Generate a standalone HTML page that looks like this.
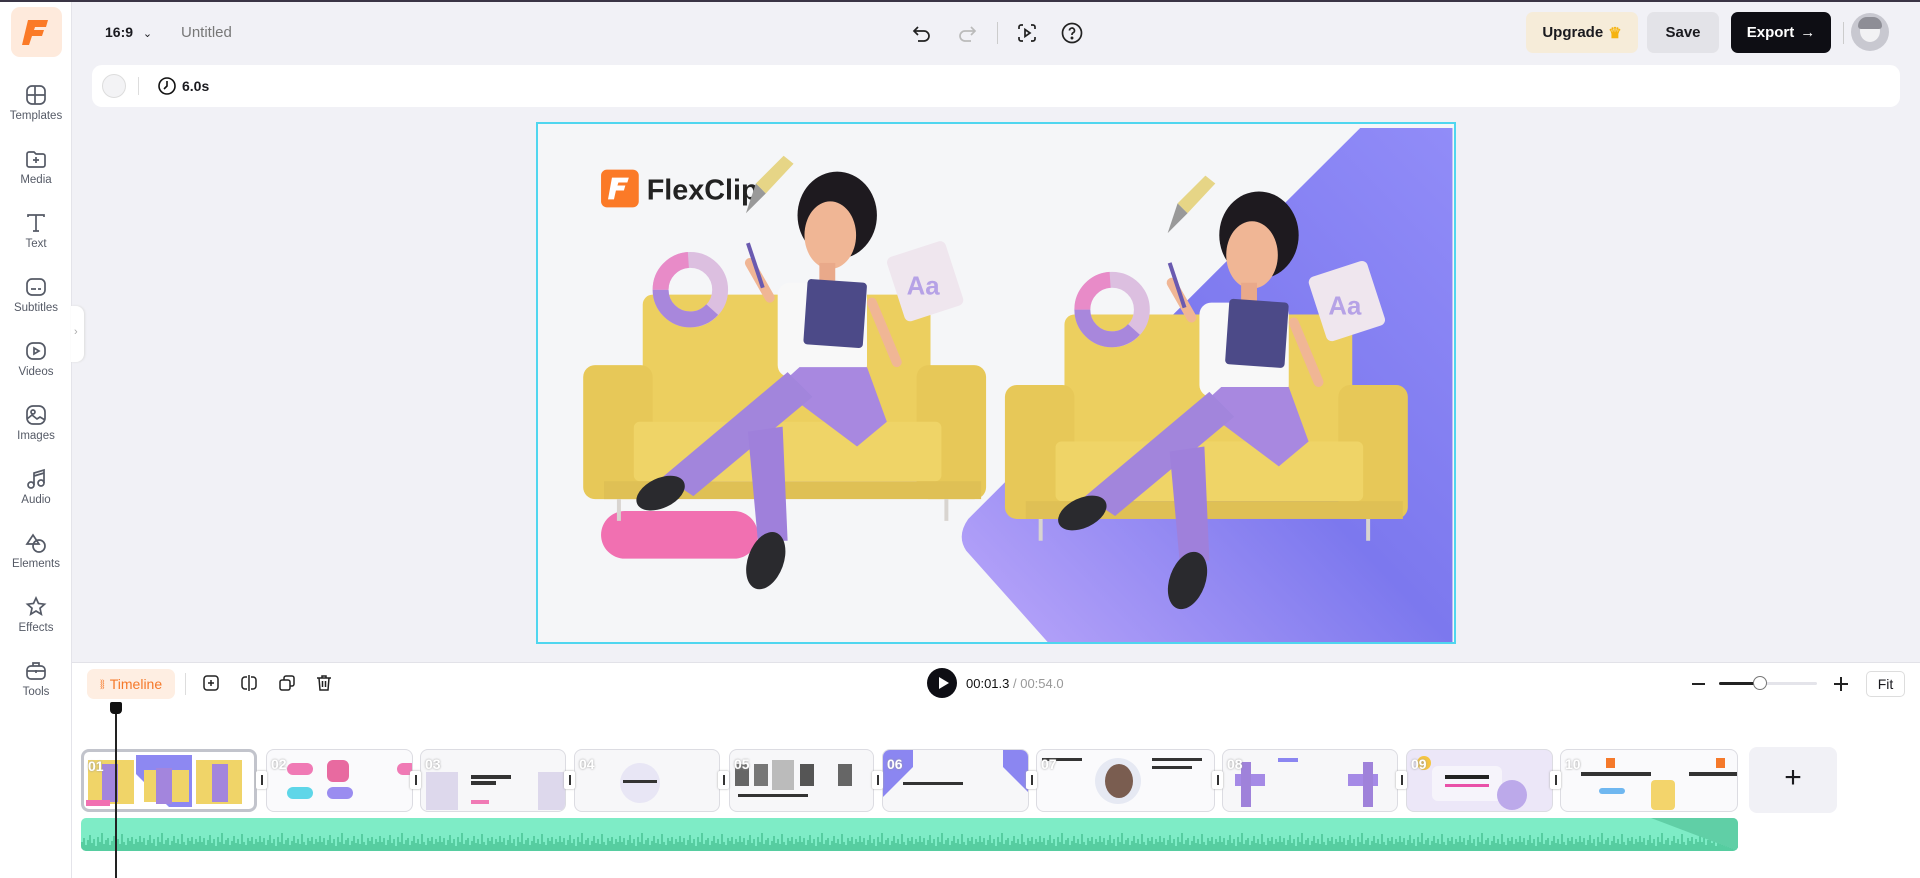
<!DOCTYPE html>
<html><head><meta charset="utf-8">
<style>
*{box-sizing:border-box;margin:0;padding:0}
body{width:1920px;height:878px;overflow:hidden;background:#f1f1f6;font-family:"Liberation Sans",sans-serif;position:relative;color:#1a1a1f}
.abs{position:absolute}
#topline{left:0;top:0;width:1920px;height:2px;background:#3a3545}
#side{left:0;top:0;width:72px;height:878px;background:#fff;border-right:1px solid #e4e4ea}
.logo{left:11px;top:7px;width:51px;height:50px;background:#feeadc;border-radius:9px}
.nav{left:0;width:72px;text-align:center;font-size:11.5px;color:#555a66}
.nav svg{display:block;margin:0 auto 3px}
.btn{border-radius:7px;font-size:15px;font-weight:bold;display:flex;align-items:center;justify-content:center}
#bar2{left:92px;top:65px;width:1808px;height:42px;background:#fff;border-radius:10px}
#canvas{left:536px;top:122px;width:920px;height:522px;border:2px solid #4fd6ef;background:#f5f6f8;overflow:hidden}
#tl{left:72px;top:662px;width:1848px;height:216px;background:#fff;border-top:1px solid #e2e2e8}
.clip{top:749px;height:63px;background:#f7f7f9;border:1px solid #dcdce2;border-radius:8px;overflow:hidden}
.num{position:absolute;left:4px;top:6px;color:#fff;font-weight:bold;font-size:14px;text-shadow:0 0 2px #999}
.hd{top:771px;width:11px;height:18px;background:#fff;border-radius:2px;box-shadow:0 0 2px #aaa}
.hd:after{content:"";position:absolute;left:5px;top:4px;width:1.5px;height:10px;background:#333}
</style></head><body>
<div class="abs" id="side"></div>
<div class="abs" id="topline"></div>
<div class="abs logo"><svg width="51" height="50" viewBox="0 0 51 50"><path d="M17 13h20l-2 7H24l-1 3h10l-2 6H21l-3 9h-7z" fill="#fb7a27"/></svg></div>

<div class="abs nav" style="top:83px"><svg width="24" height="24" viewBox="0 0 24 24" fill="none" stroke="#555a66" stroke-width="1.7"><rect x="3" y="3" width="18" height="18" rx="5"/><path d="M3 12h18M11 3v18"/></svg>Templates</div>
<div class="abs nav" style="top:147px"><svg width="24" height="24" viewBox="0 0 24 24" fill="none" stroke="#555a66" stroke-width="1.7"><path d="M3 7a2 2 0 0 1 2-2h5l2 2h7a2 2 0 0 1 2 2v9a2 2 0 0 1-2 2H5a2 2 0 0 1-2-2z"/><path d="M12 10v6M9 13h6"/></svg>Media</div>
<div class="abs nav" style="top:211px"><svg width="24" height="24" viewBox="0 0 24 24" fill="none" stroke="#555a66" stroke-width="1.7"><path d="M4 6V4h16v2M12 4v16M9 20h6"/></svg>Text</div>
<div class="abs nav" style="top:275px"><svg width="24" height="24" viewBox="0 0 24 24" fill="none" stroke="#555a66" stroke-width="1.7"><rect x="3" y="4" width="18" height="16" rx="5"/><path d="M7 14h5M14 14h3"/></svg>Subtitles</div>
<div class="abs nav" style="top:339px"><svg width="24" height="24" viewBox="0 0 24 24" fill="none" stroke="#555a66" stroke-width="1.7"><rect x="3" y="4" width="18" height="16" rx="6"/><path d="M10 9l5 3-5 3z"/></svg>Videos</div>
<div class="abs nav" style="top:403px"><svg width="24" height="24" viewBox="0 0 24 24" fill="none" stroke="#555a66" stroke-width="1.7"><rect x="3" y="3" width="18" height="18" rx="6"/><circle cx="9" cy="9" r="2"/><path d="M3 16l5-4 5 4 3-2 5 3"/></svg>Images</div>
<div class="abs nav" style="top:467px"><svg width="24" height="24" viewBox="0 0 24 24" fill="none" stroke="#555a66" stroke-width="1.7"><circle cx="7" cy="18" r="3"/><circle cx="17" cy="16" r="3"/><path d="M10 18V6l10-3v13"/><path d="M10 9l10-3"/></svg>Audio</div>
<div class="abs nav" style="top:531px"><svg width="24" height="24" viewBox="0 0 24 24" fill="none" stroke="#555a66" stroke-width="1.7"><path d="M3 13l6-9 6 9z"/><circle cx="15" cy="15" r="6"/></svg>Elements</div>
<div class="abs nav" style="top:595px"><svg width="24" height="24" viewBox="0 0 24 24" fill="none" stroke="#555a66" stroke-width="1.7"><path d="M12 3l2.5 5.5 6 .7-4.5 4 1.3 6L12 16l-5.3 3.2 1.3-6-4.5-4 6-.7z"/></svg>Effects</div>
<div class="abs nav" style="top:659px"><svg width="24" height="24" viewBox="0 0 24 24" fill="none" stroke="#555a66" stroke-width="1.7"><rect x="3" y="7" width="18" height="13" rx="4"/><path d="M9 7V4h6v3M3 12h18M12 11v3"/></svg>Tools</div>
<div class="abs" style="left:71px;top:306px;width:13px;height:56px;background:#fff;border-radius:0 8px 8px 0;box-shadow:1px 0 2px #ddd"><span style="position:absolute;left:3px;top:20px;font-size:11px;color:#aaa">›</span></div>

<div class="abs" style="left:105px;top:24px;font-size:14px;font-weight:bold">16:9 <span style="font-weight:normal;font-size:11px;margin-left:6px">⌄</span></div>
<div class="abs" style="left:181px;top:24px;font-size:15px;color:#777">Untitled</div>
<svg class="abs" style="left:910px;top:21px" width="24" height="24" viewBox="0 0 24 24" fill="none" stroke="#222" stroke-width="1.7"><path d="M8 6L4 10l4 4"/><path d="M4 10h10a5 5 0 0 1 0 10h-6"/></svg>
<svg class="abs" style="left:955px;top:21px" width="24" height="24" viewBox="0 0 24 24" fill="none" stroke="#bbb" stroke-width="1.7"><path d="M16 6l4 4-4 4"/><path d="M20 10H10a5 5 0 0 0 0 10h6"/></svg>
<div class="abs" style="left:997px;top:22px;width:1px;height:22px;background:#ccc"></div>
<svg class="abs" style="left:1015px;top:21px" width="24" height="24" viewBox="0 0 24 24" fill="none" stroke="#222" stroke-width="1.7"><path d="M4 8V6a2 2 0 0 1 2-2h2M16 4h2a2 2 0 0 1 2 2v2M20 16v2a2 2 0 0 1-2 2h-2M8 20H6a2 2 0 0 1-2-2v-2"/><path d="M10 8.5l5 3.5-5 3.5z"/></svg>
<svg class="abs" style="left:1060px;top:21px" width="24" height="24" viewBox="0 0 24 24" fill="none" stroke="#222" stroke-width="1.7"><circle cx="12" cy="12" r="9.5"/><path d="M9.5 9.5a2.5 2.5 0 1 1 3.5 2.3c-.7.4-1 .9-1 1.7v.5"/><circle cx="12" cy="17" r=".6" fill="#222"/></svg>
<div class="abs btn" style="left:1526px;top:12px;width:112px;height:41px;background:#f6ecd9">Upgrade <span style="color:#f5b30f;margin-left:5px">♛</span></div>
<div class="abs btn" style="left:1647px;top:12px;width:72px;height:41px;background:#e3e3e8">Save</div>
<div class="abs btn" style="left:1731px;top:12px;width:100px;height:41px;background:#0e0e14;color:#fff">Export <span style="margin-left:6px">→</span></div>
<div class="abs" style="left:1843px;top:22px;width:1px;height:22px;background:#ccc"></div>
<div class="abs" style="left:1851px;top:13px;width:38px;height:38px;border-radius:50%;background:#c8c8d0;overflow:hidden"><div style="position:absolute;left:9px;top:7px;width:20px;height:22px;border-radius:50%;background:#f2f2f4"></div><div style="position:absolute;left:7px;top:4px;width:24px;height:12px;border-radius:12px 12px 4px 4px;background:#8e8e96"></div></div>

<div class="abs" id="bar2">
<div class="abs" style="left:10px;top:9px;width:24px;height:24px;border-radius:50%;border:1px solid #ddd;background:#f3f3f5"></div>
<div class="abs" style="left:46px;top:12px;width:1px;height:18px;background:#ddd"></div>
<svg class="abs" style="left:65px;top:11px" width="20" height="20" viewBox="0 0 20 20" fill="none" stroke="#111" stroke-width="1.6"><circle cx="10" cy="10" r="8"/><path d="M10 5v5l-3 3"/></svg>
<div class="abs" style="left:90px;top:13px;font-size:14px;font-weight:bold">6.0s</div>
</div>

<div class="abs" id="canvas">
<svg width="916" height="518" viewBox="0 0 920 522">
<defs><linearGradient id="pg" x1="0" y1="1" x2="1" y2="0"><stop offset="0" stop-color="#bba7fa"/><stop offset=".5" stop-color="#7c78ee"/><stop offset="1" stop-color="#918cf8"/></linearGradient></defs>
<path d="M827 4H920V522H512L430 430Q420 415 432 398Z" fill="url(#pg)"/>
<rect x="62" y="46" width="38" height="38" rx="6" fill="#fb7a27"/>
<path d="M73 54h17l-1.5 5h-9l-1 3h8l-1.5 5h-8l-2 9h-6z" fill="#fff"/>
<text x="108" y="76" font-family="Liberation Sans" font-weight="bold" font-size="29" fill="#222">FlexClip</text>
<rect x="62" y="390" width="158" height="48" rx="24" fill="#f170b1"/>
<g id="w1">
<rect x="104" y="172" width="290" height="130" rx="10" fill="#eccf5f"/>
<rect x="44" y="243" width="70" height="135" rx="12" fill="#e7c858"/>
<rect x="380" y="243" width="70" height="135" rx="12" fill="#e7c858"/>
<rect x="95" y="300" width="310" height="60" rx="6" fill="#efd467"/>
<rect x="65" y="360" width="380" height="18" fill="#dfc055"/>
<path d="M80 378v22M410 378v22" stroke="#d8d4d0" stroke-width="4"/>
<circle cx="152" cy="167" r="30" fill="none" stroke="#dcbfe0" stroke-width="16"/>
<path d="M122 167a30 30 0 0 0 30 30 30 30 0 0 0 22-10" fill="none" stroke="#a887dc" stroke-width="16"/>
<path d="M150 137a30 30 0 0 0-28 30" fill="none" stroke="#e88bc8" stroke-width="16"/>
<rect x="358" y="125" width="62" height="68" rx="6" fill="#efe6ee" transform="rotate(-18 387 160)"/>
<text x="370" y="172" font-family="Liberation Sans" font-weight="bold" font-size="26" fill="#b6a2e6">Aa</text>
<path d="M218 60l28-28 10 8-28 30z" fill="#e6d586"/><path d="M218 60l-10 30 20-20z" fill="#999"/>
<ellipse cx="300" cy="92" rx="40" ry="44" fill="#1e1a1f"/>
<ellipse cx="293" cy="112" rx="26" ry="34" fill="#f0b695"/>
<rect x="282" y="140" width="16" height="18" fill="#e9a98a"/>
<rect x="240" y="160" width="90" height="95" rx="12" fill="#f8f8f8"/>
<path d="M232 175l-20-35" stroke="#f0b695" stroke-width="10" stroke-linecap="round"/>
<path d="M335 180l25 60" stroke="#f0b695" stroke-width="10" stroke-linecap="round"/>
<rect x="268" y="158" width="60" height="66" rx="4" fill="#4c4a88" transform="rotate(4 298 190)"/>
<path d="M262 245h68l20 55-30 25-80-60z" fill="#a888e0"/>
<path d="M250 250l25 25-120 100-30-20z" fill="#a285dc"/>
<path d="M210 310l35-5 5 115-30 0z" fill="#9f80db"/>
<ellipse cx="122" cy="372" rx="26" ry="15" fill="#2a2a2e" transform="rotate(-25 122 372)"/>
<ellipse cx="228" cy="440" rx="18" ry="30" fill="#2a2a2e" transform="rotate(20 228 440)"/>
<path d="M225 165l-15-45" stroke="#6a5ab0" stroke-width="4"/>
</g>
<use href="#w1" transform="translate(425 20)"/>
</svg>
</div>

<div class="abs" id="tl"></div>
<div class="abs" style="left:87px;top:669px;width:88px;height:30px;background:#feeee2;border-radius:7px;color:#f5792a;font-size:14px;display:flex;align-items:center;justify-content:center"><span style="margin-right:5px">⧚</span>Timeline</div>
<div class="abs" style="left:185px;top:673px;width:1px;height:22px;background:#ddd"></div>
<svg class="abs" style="left:201px;top:673px" width="20" height="20" viewBox="0 0 20 20" fill="none" stroke="#222" stroke-width="1.5"><rect x="3" y="3" width="14" height="14" rx="3"/><path d="M10 7v6M7 10h6"/></svg>
<svg class="abs" style="left:239px;top:673px" width="20" height="20" viewBox="0 0 20 20" fill="none" stroke="#222" stroke-width="1.5"><path d="M8 4H6a3 3 0 0 0-3 3v6a3 3 0 0 0 3 3h2M12 4h2a3 3 0 0 1 3 3v6a3 3 0 0 1-3 3h-2M10 2v16"/></svg>
<svg class="abs" style="left:277px;top:673px" width="20" height="20" viewBox="0 0 20 20" fill="none" stroke="#222" stroke-width="1.5"><rect x="3" y="7" width="10" height="10" rx="2"/><path d="M7 7V5a2 2 0 0 1 2-2h6a2 2 0 0 1 2 2v6a2 2 0 0 1-2 2h-2"/></svg>
<svg class="abs" style="left:314px;top:673px" width="20" height="20" viewBox="0 0 20 20" fill="none" stroke="#222" stroke-width="1.5"><path d="M3 5h14M8 5V3h4v2M5 5l1 12h8l1-12M8.5 8v6M11.5 8v6"/></svg>
<div class="abs" style="left:927px;top:668px;width:30px;height:30px;border-radius:50%;background:#0e0e14"></div>
<svg class="abs" style="left:935px;top:675px" width="16" height="16" viewBox="0 0 16 16"><path d="M4 2l10 6-10 6z" fill="#fff"/></svg>
<div class="abs" style="left:966px;top:676px;font-size:13px"><b style="font-weight:normal;color:#111">00:01.3</b> <span style="color:#999">/ 00:54.0</span></div>
<div class="abs" style="left:1692px;top:683px;width:13px;height:1.5px;background:#222"></div>
<div class="abs" style="left:1719px;top:682px;width:98px;height:3px;background:#e4e4ea;border-radius:2px"></div>
<div class="abs" style="left:1719px;top:682px;width:40px;height:3px;background:#222;border-radius:2px"></div>
<div class="abs" style="left:1753px;top:676px;width:14px;height:14px;border-radius:50%;background:#fff;border:1.5px solid #777"></div>
<div class="abs" style="left:1834px;top:683px;width:14px;height:1.5px;background:#222"></div>
<div class="abs" style="left:1840px;top:677px;width:1.5px;height:14px;background:#222"></div>
<div class="abs" style="left:1866px;top:671px;width:39px;height:26px;border:1px solid #ddd;border-radius:5px;font-size:14px;text-align:center;line-height:24px">Fit</div>

<div class="abs clip" style="left:81px;width:176px;border:3px solid #c2c4cc;background:#fff">
<div class="abs" style="left:4px;top:8px;width:46px;height:44px;background:#f0d468"></div>
<div class="abs" style="left:52px;top:3px;width:56px;height:52px;background:linear-gradient(45deg,#fff 30%,#8d88f2 31%)"></div>
<div class="abs" style="left:60px;top:18px;width:45px;height:32px;background:#f0d468"></div>
<div class="abs" style="left:112px;top:8px;width:46px;height:44px;background:#f0d468"></div>
<div class="abs" style="left:18px;top:12px;width:16px;height:38px;background:#a385dd"></div>
<div class="abs" style="left:72px;top:16px;width:16px;height:36px;background:#a385dd"></div>
<div class="abs" style="left:128px;top:12px;width:16px;height:38px;background:#a385dd"></div>
<div class="abs" style="left:2px;top:48px;width:24px;height:6px;background:#f170b1"></div><span class="num">01</span></div>
<div class="abs clip" style="left:266px;width:147px;background:#fafafc"><div class="abs" style="left:20px;top:13px;width:26px;height:12px;border-radius:6px;background:#f07ab5"></div><div class="abs" style="left:20px;top:37px;width:26px;height:12px;border-radius:6px;background:#5ed6e8"></div><div class="abs" style="left:60px;top:37px;width:26px;height:12px;border-radius:6px;background:#9a8cf0"></div><div class="abs" style="left:60px;top:10px;width:22px;height:22px;border-radius:6px;background:#e86aa0"></div><div class="abs" style="left:130px;top:13px;width:20px;height:12px;border-radius:6px;background:#f07ab5"></div><span class="num">02</span></div>
<div class="abs clip" style="left:420px;width:146px"><div class="abs" style="left:5px;top:22px;width:32px;height:38px;background:#ddd8ec"></div><div class="abs" style="left:117px;top:22px;width:32px;height:38px;background:#ddd8ec"></div><div class="abs" style="left:50px;top:25px;width:40px;height:4px;background:#333"></div><div class="abs" style="left:50px;top:31px;width:25px;height:4px;background:#333"></div><div class="abs" style="left:50px;top:50px;width:18px;height:4px;background:#f07ab5"></div><span class="num">03</span></div>
<div class="abs clip" style="left:574px;width:146px"><div class="abs" style="left:45px;top:13px;width:40px;height:40px;border-radius:50%;background:#e8e6f5"></div><div class="abs" style="left:48px;top:30px;width:34px;height:3px;background:#333"></div><span class="num">04</span></div>
<div class="abs clip" style="left:729px;width:145px"><div class="abs" style="left:5px;top:14px;width:14px;height:22px;background:#666"></div><div class="abs" style="left:24px;top:14px;width:14px;height:22px;background:#777"></div><div class="abs" style="left:42px;top:10px;width:22px;height:30px;background:#bbb"></div><div class="abs" style="left:70px;top:14px;width:14px;height:22px;background:#555"></div><div class="abs" style="left:108px;top:14px;width:14px;height:22px;background:#666"></div><div class="abs" style="left:8px;top:44px;width:70px;height:3px;background:#333"></div><span class="num">05</span></div>
<div class="abs clip" style="left:882px;width:147px"><div class="abs" style="left:0;top:0;width:30px;height:63px;background:linear-gradient(135deg,#8b86f1 50%,transparent 51%)"></div><div class="abs" style="left:120px;top:0;width:30px;height:63px;background:linear-gradient(225deg,#8b86f1 50%,transparent 51%)"></div><div class="abs" style="left:20px;top:32px;width:60px;height:3px;background:#333"></div><span class="num">06</span></div>
<div class="abs clip" style="left:1036px;width:179px;background:#fafafc"><div class="abs" style="left:58px;top:8px;width:46px;height:46px;border-radius:50%;background:#e6e9f3"></div><div class="abs" style="left:68px;top:14px;width:28px;height:34px;border-radius:50%;background:#7a5d50"></div><div class="abs" style="left:5px;top:8px;width:40px;height:3px;background:#333"></div><div class="abs" style="left:115px;top:8px;width:50px;height:3px;background:#333"></div><div class="abs" style="left:115px;top:16px;width:40px;height:3px;background:#333"></div><span class="num">07</span></div>
<div class="abs clip" style="left:1222px;width:176px"><div class="abs" style="left:12px;top:24px;width:30px;height:12px;background:#a58ae6"></div><div class="abs" style="left:125px;top:24px;width:30px;height:12px;background:#a58ae6"></div><div class="abs" style="left:55px;top:8px;width:20px;height:4px;background:#8b86f1"></div><div class="abs" style="left:18px;top:12px;width:10px;height:45px;background:#9f82da"></div><div class="abs" style="left:140px;top:12px;width:10px;height:45px;background:#9f82da"></div><span class="num">08</span></div>
<div class="abs clip" style="left:1406px;width:147px;background:#ece7f8"><div class="abs" style="left:25px;top:16px;width:70px;height:35px;border-radius:6px;background:#f6f4fb"></div><div class="abs" style="left:38px;top:25px;width:44px;height:4px;background:#222"></div><div class="abs" style="left:38px;top:34px;width:44px;height:3px;background:#e950a8"></div><div class="abs" style="left:90px;top:30px;width:30px;height:30px;border-radius:50%;background:#bca9ea"></div><div class="abs" style="left:10px;top:6px;width:14px;height:14px;border-radius:50%;background:#f5c542"></div><span class="num">09</span></div>
<div class="abs clip" style="left:1560px;width:178px;background:#fafafc"><div class="abs" style="left:20px;top:22px;width:70px;height:4px;background:#333"></div><div class="abs" style="left:128px;top:22px;width:50px;height:4px;background:#333"></div><div class="abs" style="left:45px;top:8px;width:9px;height:10px;background:#f5792a"></div><div class="abs" style="left:155px;top:8px;width:9px;height:10px;background:#f5792a"></div><div class="abs" style="left:38px;top:38px;width:26px;height:6px;background:#6fb7f0;border-radius:3px"></div><div class="abs" style="left:90px;top:30px;width:24px;height:30px;background:#f3d46b;border-radius:4px"></div><span class="num">10</span></div>
<div class="abs hd" style="left:256px"></div><div class="abs hd" style="left:410px"></div><div class="abs hd" style="left:564px"></div><div class="abs hd" style="left:718px"></div><div class="abs hd" style="left:872px"></div><div class="abs hd" style="left:1026px"></div><div class="abs hd" style="left:1212px"></div><div class="abs hd" style="left:1396px"></div><div class="abs hd" style="left:1550px"></div>
<div class="abs" style="left:1749px;top:747px;width:88px;height:66px;background:#f1f1f6;border-radius:8px;text-align:center;line-height:62px;font-size:30px;font-weight:300">+</div>

<div class="abs" style="left:81px;top:818px;width:1657px;height:33px;background:#7eecc6;border-radius:5px;overflow:hidden">
<svg width="1657" height="33"><defs><pattern id="wv" width="60" height="33" patternUnits="userSpaceOnUse"><path d="M1 33v-9M3 33v-13M5 33v-6M7 33v-11M9 33v-16M11 33v-8M13 33v-12M15 33v-5M17 33v-14M19 33v-9M21 33v-18M23 33v-7M25 33v-11M27 33v-13M29 33v-6M31 33v-10M33 33v-15M35 33v-8M37 33v-12M39 33v-7M41 33v-17M43 33v-9M45 33v-6M47 33v-13M49 33v-10M51 33v-14M53 33v-7M55 33v-12M57 33v-9M59 33v-15" stroke="#3bb886" stroke-width="1.2"/></pattern></defs><rect y="0" width="1657" height="33" fill="url(#wv)"/><path d="M1570 0H1657V33Z" fill="#60cfa6"/></svg>
</div>

<div class="abs" style="left:115px;top:712px;width:2px;height:166px;background:#222"></div>
<div class="abs" style="left:110px;top:702px;width:12px;height:12px;background:#111;border-radius:2px 2px 4px 4px"></div>
</body></html>
